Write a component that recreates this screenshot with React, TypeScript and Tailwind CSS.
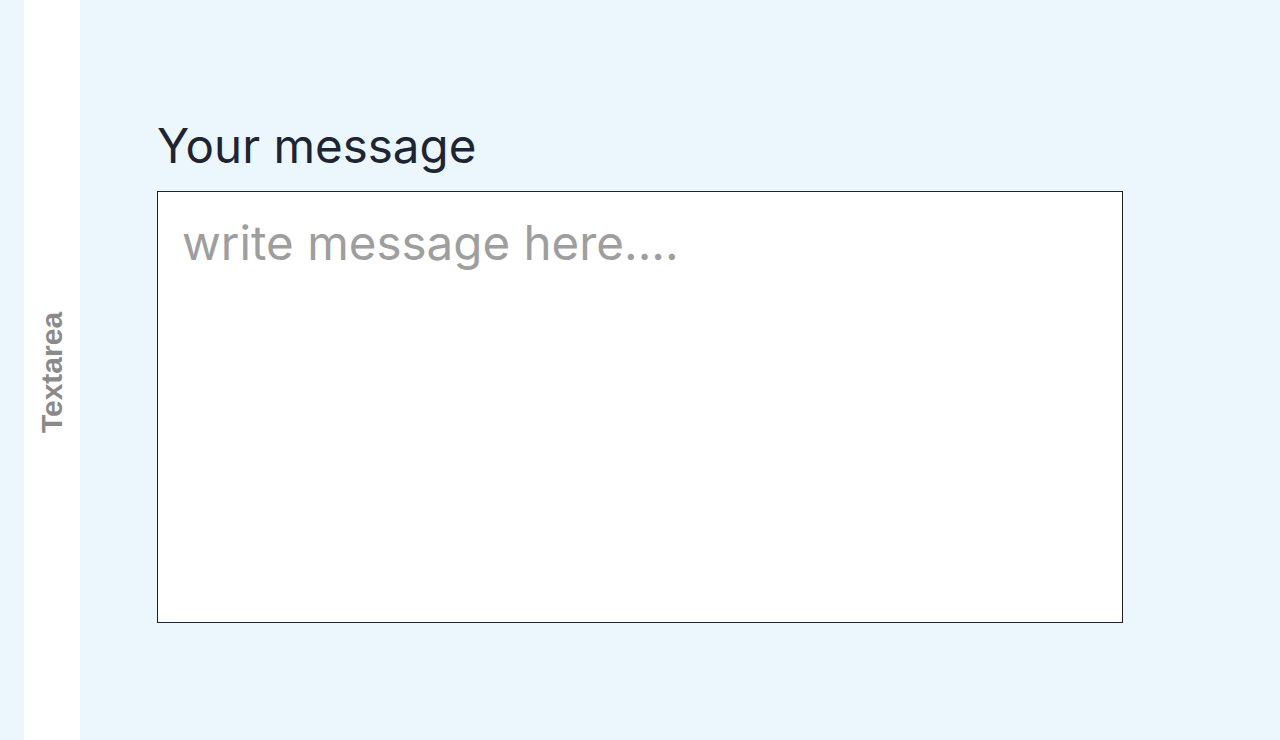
export default function App() {
  return (
    <div className="flex h-[740px] w-full bg-[#ecf7fd]">
      <div className="ml-6 flex w-14 shrink-0 items-center justify-center bg-white">
        <span className="mt-[5px] -rotate-90 whitespace-nowrap font-['Liberation_Sans',Arial,sans-serif] text-[30px] font-bold text-[#8a8a8a]">
          Textarea
        </span>
      </div>
      <main className="flex-1 pl-[77px] pt-[110px] font-['Inter',sans-serif]">
        <label htmlFor="msg" className="mb-[9px] block text-[47.5px] leading-[72px] text-[#1e2432]">
          Your message
        </label>
        <textarea
          id="msg"
          placeholder="write message here...."
          className="block h-[432px] w-[966px] resize-none border border-[#1f2330] bg-white px-6 pt-[15px] text-[47.5px] leading-[72px] text-gray-800 outline-none placeholder:text-[#9e9e9e]"
        />
      </main>
    </div>
  );
}
